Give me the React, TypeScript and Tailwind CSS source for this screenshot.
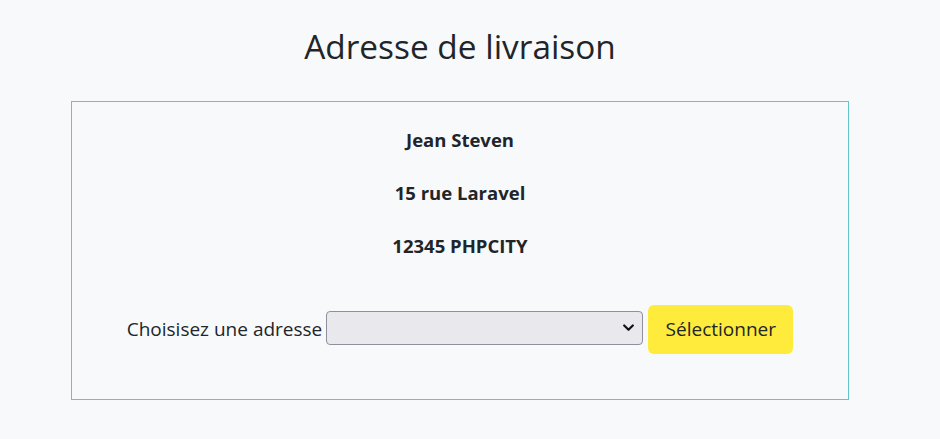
import React from "react";

export default function App() {
  return (
    <div
      className="min-h-screen w-full bg-[#f8f9fa] text-[#212529]"
      style={{ fontFamily: '"Open Sans", "Noto Sans", sans-serif' }}
    >
      <div className="w-[920px]">
        <div className="flex h-[101px] items-center justify-center pb-[7px]">
          <h2 className="text-[33.4px] leading-none font-normal">Adresse de livraison</h2>
        </div>
        <div className="mx-auto h-[299px] w-[778px] border border-[#63c5c9] pt-[11px]">
          <div className="flex h-[53px] items-center justify-center text-[18.5px] font-bold">Jean Steven</div>
          <div className="flex h-[53px] items-center justify-center text-[18.5px] font-bold">15 rue Laravel</div>
          <div className="flex h-[53px] items-center justify-center text-[18.5px] font-bold">12345 PHPCITY</div>
          <div className="mt-[33px] flex h-[49px] items-center justify-center text-[19px]">
            <label className="mr-[4px]">Choisisez une adresse</label>
            <div className="relative mb-[3px] h-[34px] w-[317px]">
              <select className="h-full w-full appearance-none rounded-[4px] border border-[#8f8f9d] bg-[#e9e9ed] px-1 text-[16px]">
                <option></option>
              </select>
              <svg
                className="pointer-events-none absolute right-[9px] top-[13px]"
                width="11"
                height="8"
                viewBox="0 0 11 8"
                fill="none"
              >
                <path d="M1.2 1.5 L5.5 5.8 L9.8 1.5" stroke="#111" strokeWidth="2.2" strokeLinecap="round" strokeLinejoin="round" />
              </svg>
            </div>
            <button className="ml-[5px] h-[49px] w-[145px] rounded-[6px] bg-[#ffeb3b] text-[19px] text-[#212529]">
              Sélectionner
            </button>
          </div>
        </div>
      </div>
    </div>
  );
}
